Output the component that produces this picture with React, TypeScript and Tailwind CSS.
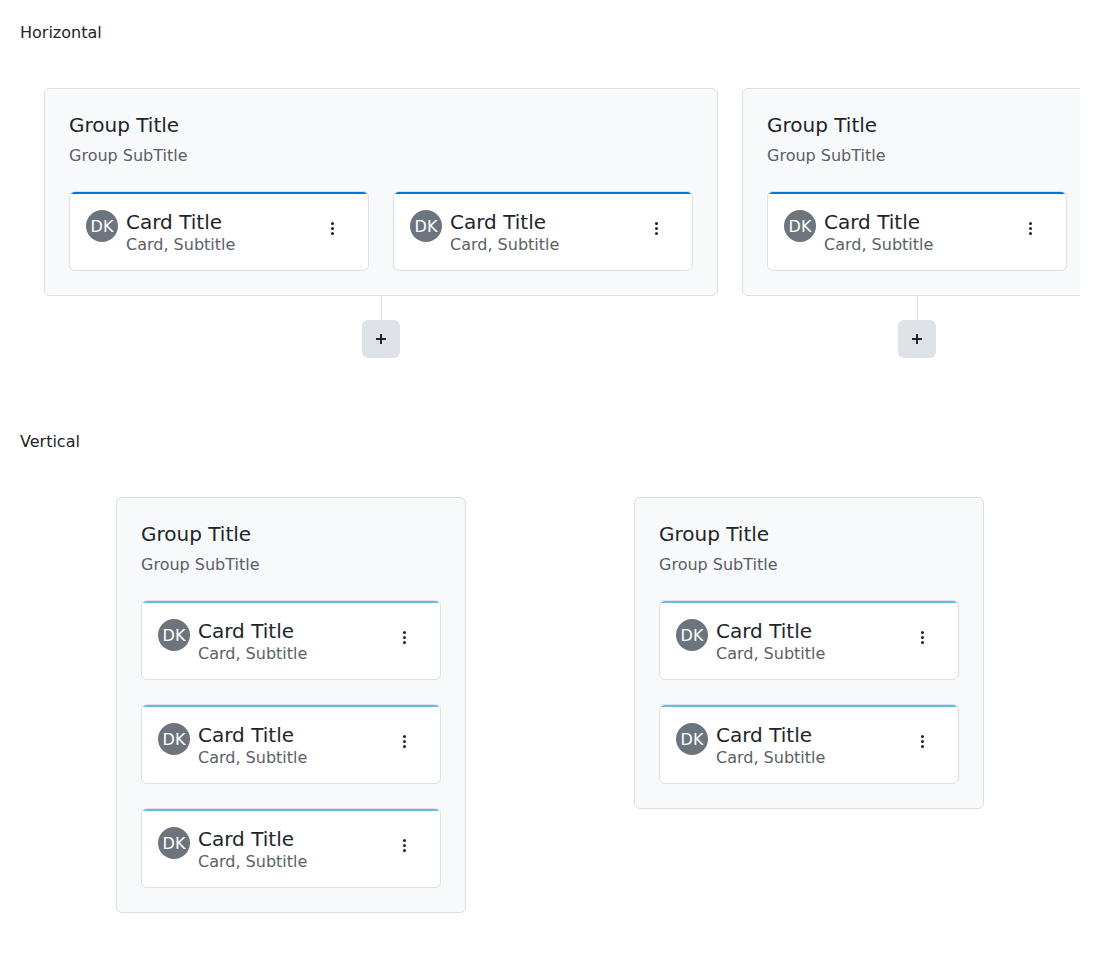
type Tone = 'blue' | 'cyan';

function TaskCard({ tone }: { tone: Tone }) {
  return (
    <div className="h-20 w-[300px] shrink-0 overflow-hidden rounded-md border border-[#dfe0e1] bg-white">
      <div className={tone === 'blue' ? 'h-0.5 bg-[#0275d8]' : 'h-0.5 bg-[#5bc0de]'} />
      <div className="flex px-4 pt-4">
        <div className="flex size-8 shrink-0 items-center justify-center rounded-full bg-[#6c757d] pt-0.5 leading-6 text-white">
          DK
        </div>
        <div className="ml-2 grow">
          <div className="text-xl leading-6 text-[#212529]">Card Title</div>
          <div className="text-base leading-[22px] text-[#596066]">Card, Subtitle</div>
        </div>
        <button type="button" aria-label="More" className="-mt-px mr-1 size-8 pt-2 pl-2 text-[#212529]">
          <svg width="16" height="16" viewBox="0 0 16 16" fill="currentColor" className="block">
            <circle cx="8.5" cy="2.5" r="1.5" />
            <circle cx="8.5" cy="7.5" r="1.5" />
            <circle cx="8.5" cy="12.5" r="1.5" />
          </svg>
        </button>
      </div>
    </div>
  );
}

function Group({ count, tone, vertical = false }: { count: number; tone: Tone; vertical?: boolean }) {
  return (
    <div className="shrink-0 rounded-md border border-[#dcdddf] bg-[#f8f9fb] p-6">
      <div className="text-xl leading-6 text-[#212529]">Group Title</div>
      <div className="mt-[7px] text-base leading-6 text-[#596066]">Group SubTitle</div>
      <div className={vertical ? 'mt-[23px] flex flex-col gap-6' : 'mt-[23px] flex gap-6'}>
        {Array.from({ length: count }, (_, i) => (
          <TaskCard key={i} tone={tone} />
        ))}
      </div>
    </div>
  );
}

function AddBranch() {
  return (
    <>
      <div className="ml-px h-6 w-px bg-[#dee2e6]" />
      <button type="button" aria-label="Add" className="flex size-[38px] items-center justify-center rounded-md bg-[#dee2e6] text-[#212529]">
        <svg width="10" height="10" viewBox="0 0 10 10" fill="currentColor">
          <path d="M4 0h2v4h4v2H6v4H4V6H0V4h4z" />
        </svg>
      </button>
    </>
  );
}

export default function App() {
  return (
    <main className="min-h-[976px] bg-white px-5 pt-[21px] font-['DejaVu_Sans',sans-serif] text-base leading-6 text-[#212529]">
      <h2>Horizontal</h2>
      <section className="mt-[19px] flex items-start gap-6 overflow-hidden p-6">
        {[2, 1].map((count) => (
          <div key={count} className="flex shrink-0 flex-col items-center">
            <Group count={count} tone="blue" />
            <AddBranch />
          </div>
        ))}
      </section>
      <h2 className="mt-12">Vertical</h2>
      <section className="mt-[19px] grid grid-cols-2 items-start justify-items-center gap-6 p-6">
        <Group count={3} tone="cyan" vertical />
        <Group count={2} tone="cyan" vertical />
      </section>
    </main>
  );
}
